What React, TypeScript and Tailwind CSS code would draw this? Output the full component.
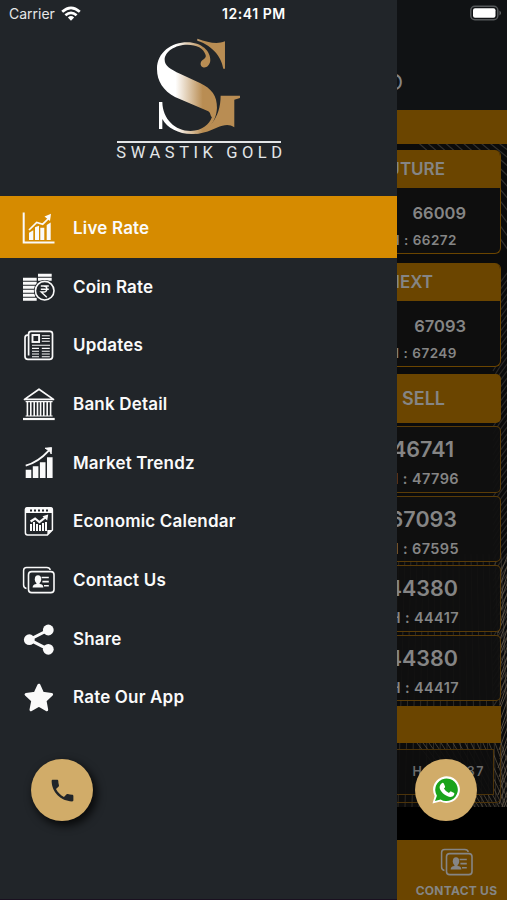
import type { ReactNode } from 'react';
import { MdPhone } from 'react-icons/md';

const ICONS: Record<string, ReactNode> = {
  live: (
    <>
      <path d="M1.7 1.5V31.6H32.5" fill="none" stroke="currentColor" strokeWidth="2" />
      <path d="M7 21.7l4.3-2.4V29H7zM13 16.3l4-1.6V29h-4zM18.3 16.7h4V29h-4zM24.7 14l4-2.4V29h-4z" />
      <path d="M7 19l7.7-7.6 6 1.8L27 7" fill="none" stroke="currentColor" strokeWidth="1.7" />
      <path d="M22.5 5.6L29 2.8 28 10z" />
    </>
  ),
  coin: (
    <>
      <path d="M1 9.2h13.7M1 13.2h13.7M1 17.2h12M1 21.2h11M1 25.2h12M1 29.2h13.7M16 5.3h13.7M16 9.3h13.7" stroke="currentColor" strokeWidth="2.9" />
      <circle cx="22.7" cy="20.7" r="10.8" fill="#212529" />
      <circle cx="22.7" cy="20.7" r="9.3" fill="none" stroke="currentColor" strokeWidth="1.6" />
      <path d="M18.8 16h8M18.8 19.2h8M18.8 16h2.6c4.6 0 4.6 6 0 6h-2.2l5.6 5.2" fill="none" stroke="currentColor" strokeWidth="1.4" />
    </>
  ),
  updates: (
    <g fill="none" stroke="currentColor">
      <path d="M6.5 7.2H5.4Q3 7.4 3 9.9V28.6q0 2.8 3 2.8h21.5q3 0 3-2.8V6q0-2.6-2.6-2.6H9.2Q6.6 3.4 6.6 6v21.5" strokeWidth="1.7" />
      <rect x="10.5" y="7" width="6.6" height="7" strokeWidth="1.9" />
      <path d="M19.8 7.8h8M19.8 10.5h8M19.8 13.2h8M10 17.3h18M10 20.4h7M19.8 20.4h8M10 23.2h7M19.8 23.2h8M10 26h7M19.8 26h8M10 28.7h7M19.8 28.7h8" strokeWidth="1.1" />
    </g>
  ),
  bank: (
    <g fill="none" stroke="currentColor">
      <path d="M17 2.2L2.5 12.4h29z" strokeWidth="1.7" strokeLinejoin="round" />
      <path d="M3.6 14.6h27M3.6 29h27" strokeWidth="1.1" />
      <path d="M5.4 15v14M8.8 15v14M12.2 15v14M15.5 15v14M18.6 15v14M21.8 15v14M25.2 15v14M28.6 15v14" strokeWidth="1.6" />
      <path d="M1 32h31.7" strokeWidth="2.2" />
    </g>
  ),
  market: (
    <>
      <path d="M3.7 23.7h5.6V32H3.7zM10.8 20.2h5.6V32h-5.6zM17.9 16.2h5.6V32h-5.6zM25 11.2h5.6V32H25z" />
      <path d="M3.7 19.6C13.5 17 21 11 27 4.4" fill="none" stroke="currentColor" strokeWidth="1.9" />
      <path d="M23 2.2l6.6-.6-.4 6.4-1.6-3z" stroke="currentColor" strokeWidth=".9" />
    </>
  ),
  calendar: (
    <>
      <path d="M25.4 31H5.6Q3.4 31 3.4 28.8V6q0-2.3 2.2-2.3h22.6Q30.4 3.7 30.4 6v20z" fill="none" stroke="currentColor" strokeWidth="1.5" />
      <path d="M3 9V5q0-1.7 2-1.7h23.8q2 0 2 1.7V9z" />
      <path d="M25.4 31v-5h5z" />
      <path d="M8 6.5h19" stroke="#212529" strokeWidth="2" strokeDasharray="2 2" />
      <path d="M9 27v-7M12 27v-9M15 27v-7M18 27v-6M21 27v-8M24 27v-9" stroke="currentColor" strokeWidth="2" />
      <path d="M8.6 17.5l4.5-3 4.3 3.5 6.5-5" fill="none" stroke="currentColor" strokeWidth="2.2" />
      <path d="M20.5 12.2l5.7-1.6-1 6z" />
    </>
  ),
  contact: (
    <>
      <path d="M4.5 25.4Q1.6 25 1.6 22V7.5q0-3 3-3h20.2q3 0 3.4 2.5" fill="none" stroke="currentColor" strokeWidth="1.5" />
      <rect x="6.5" y="8.6" width="25.5" height="21" rx="3.2" fill="none" stroke="currentColor" strokeWidth="1.6" />
      <ellipse cx="16" cy="16.2" rx="3.2" ry="3.9" />
      <path d="M14.4 18h3.2v3q3.6.4 3.8 3.5H10.6q.2-3.1 3.8-3.5z" />
      <path d="M19.6 14.5h7.2M20.4 18.6h6.4M22 22.7h4.8" stroke="currentColor" strokeWidth="1.6" />
    </>
  ),
  share: (
    <>
      <path d="M26.3 8L7.3 17.7l19 9.6" fill="none" stroke="currentColor" strokeWidth="3" />
      <circle cx="26.3" cy="8" r="5.4" />
      <circle cx="7.3" cy="17.7" r="5.4" />
      <circle cx="26.3" cy="27.3" r="5.4" />
    </>
  ),
  star: (
    <path
      d="M16.9 5.2l3.7 8.1 9 1.1-6.6 6.2 1.7 9.1-7.8-4.4L9 29.7l1.8-9.1-6.7-6.2 9-1.1z"
      stroke="currentColor"
      strokeWidth="3"
      strokeLinejoin="round"
    />
  ),
};

const MENU = [
  { icon: 'live', label: 'Live Rate' },
  { icon: 'coin', label: 'Coin Rate' },
  { icon: 'updates', label: 'Updates' },
  { icon: 'bank', label: 'Bank Detail' },
  { icon: 'market', label: 'Market Trendz' },
  { icon: 'calendar', label: 'Economic Calendar' },
  { icon: 'contact', label: 'Contact Us' },
  { icon: 'share', label: 'Share' },
  { icon: 'star', label: 'Rate Our App' },
];

const FUTURES = [
  { title: 'FUTURE', price: '66009', high: '66272', pad: 'pr-[55px]' },
  { title: 'NEXT', price: '67093', high: '67249', pad: 'pr-[67px]' },
];

const RATES = [
  { price: '46741', high: '47796', pad: 'pr-[46px]' },
  { price: '67093', high: '67595', pad: 'pr-[43px]' },
  { price: '44380', high: '44417', pad: 'pr-[42px]' },
  { price: '44380', high: '44417', pad: 'pr-[42px]' },
];

function Glyph({ name, className }: { name: string; className?: string }) {
  return (
    <svg viewBox="0 0 34 34" fill="currentColor" className={className}>
      {ICONS[name]}
    </svg>
  );
}

function Logo() {
  return (
    <svg viewBox="165 22 262 296" className="h-[98.7px] w-[87.3px]">
      <defs>
        <linearGradient id="gold" gradientUnits="userSpaceOnUse" x1="172" y1="0" x2="420" y2="0">
          <stop offset="0.22" stopColor="#fff" />
          <stop offset="0.55" stopColor="#b98d53" />
          <stop offset="1" stopColor="#b98d53" />
        </linearGradient>
      </defs>
      <g fill="url(#gold)">
        <path d="M171 118C171 68 215 38 262 38C305 38 332 65 331 92C330 108 318 116 309 113C300 110 300 98 307 92C315 86 319 83 317 76C311 55 290 45 262 45C225 45 194 66 194 90C194 109 212 119 240 132L300 160C335 177 352 199 351 235C348 285 315 313 275 313C235 313 202 295 187 268V298H177V217H187C188 268 225 304 272 304C308 303 328 284 336 262C331 262 333 250 325 245L225 202C190 183 171 155 171 118Z" />
        <path d="M292 27C325 38 350 45 375 35V117H370C366 88 343 49 292 33Z" />
        <path d="M362 198H420V205L403 210V293C387 282 373 285 350 294C325 306 300 314 272 313C325 309 362 265 362 198Z" />
      </g>
    </svg>
  );
}

function Backdrop() {
  return (
    <svg viewBox="0 0 110 663" className="absolute inset-x-0 top-[34px] h-[663px] w-full" fill="none">
      <g stroke="#33312e" strokeWidth="1.2">
        {Array.from({ length: 20 }, (_, i) => (
          <path key={i} d={`M${12 + i * 9} -8Q${60 + i * 8} 24 140 ${150 - i * 14}`} />
        ))}
        {Array.from({ length: 60 }, (_, i) => (
          <path key={i} d={`M96 ${150 + i * 7}Q105 ${134 + i * 7} 118 ${120 + i * 7}`} opacity="0.8" />
        ))}
      </g>
      <g stroke="#5c5245" strokeWidth="1">
        {Array.from({ length: 28 }, (_, i) => (
          <path key={i} d={`M${-20 + i * 7} 663L${-10 + i * 6} 410`} opacity="0.45" />
        ))}
        {Array.from({ length: 28 }, (_, i) => (
          <path key={i} d={`M${101 + (i % 3)} ${435 + i * 9}L112 ${408 + i * 9}`} opacity="0.9" />
        ))}
        {Array.from({ length: 16 }, (_, i) => (
          <path key={i} d={`M${70 + i * 4} 663L${20 + i * 6} 599`} opacity="0.7" />
        ))}
      </g>
    </svg>
  );
}

function MenuDrawer() {
  return (
    <aside className="flex h-full w-[397px] shrink-0 flex-col border-b border-[#1a1020] bg-[#212529]">
      <div className="flex h-[27px] items-center pl-[9px] text-[#e6e7e8]">
        <span className="w-[48px] text-[14px]">Carrier</span>
        <svg viewBox="0 0 20 15" className="ml-[4px] h-[15px] w-5" fill="none" stroke="#fff" strokeWidth="2.7">
          <path d="M1.2 5.8Q10-2.1 18.8 5.8M4.4 9.2Q10 4.4 15.6 9.2" />
          <path d="M6.9 11.4Q10 8.8 13.1 11.4L10 14.7z" fill="#fff" stroke="none" />
        </svg>
        <span className="ml-[141px] whitespace-nowrap text-[14px] font-semibold tracking-[0.55px] text-white">12:41 PM</span>
      </div>
      <div className="flex h-[169px] flex-col items-center pt-[10px]">
        <Logo />
        <div className="mt-[5px] h-[2px] w-[164px] bg-[#e3e5e7]" />
        <p className="mt-px whitespace-nowrap pl-[6px] font-[Roboto] text-[16.5px] leading-[18px] tracking-[4.55px] text-[#e3e5e7]">
          SWASTIK GOLD
        </p>
      </div>
      <nav className="text-[#fafafa]">
        {MENU.map((item, i) => (
          <div
            key={item.label}
            className={`flex items-center pl-[22px] ${i === 0 ? 'h-[61.5px] bg-[#d68b00] pt-[2px]' : 'h-[58.66px]'}`}
          >
            <Glyph name={item.icon} className="h-[34px] w-[34px]" />
            <span className="ml-[17px] whitespace-nowrap text-[17px] font-semibold leading-[26px] tracking-[0.18px]">
              {item.label}
            </span>
          </div>
        ))}
      </nav>
    </aside>
  );
}

function RateScreen() {
  return (
    <main className="flex h-full min-w-0 flex-1 flex-col overflow-hidden bg-black text-[#858585]">
      <header className="flex h-[110px] items-end justify-end bg-[#101214] pb-[17px] pr-[104px]">
        <span className="text-[22px] leading-[22px]">O</span>
      </header>
      <div className="relative h-[697px] bg-[#0b0b0b]">
        <Backdrop />
        <div className="relative flex flex-col">
          <div className="h-[34px] bg-[#6b4500]" />
          <div className="mr-[6px] mt-[6px] flex flex-col gap-[9px]">
            {FUTURES.map((f) => (
              <section key={f.title} className="h-[104px] overflow-hidden rounded-r-[6px] border-b border-r border-[#6b4500] bg-[#0e0e0e]">
                <h2 className={`flex h-[38px] items-center justify-end bg-[#6b4500] pt-[2px] text-[17px] font-semibold ${f.pad}`}>
                  {f.title}
                </h2>
                <p className="mt-[12px] flex justify-end pr-[34px] text-[16.5px] font-semibold leading-[26px]">{f.price}</p>
                <p className="mt-[4px] flex justify-end whitespace-nowrap pr-[43px] text-[13.5px] font-semibold leading-[20px] tracking-[0.5px]">
                  H : {f.high}
                </p>
              </section>
            ))}
          </div>
          <div className="mr-[6px] mt-[7px] flex h-[49px] items-center justify-end rounded-r-[5px] bg-[#6b4500] pr-[56px] text-[18px] font-semibold">
            SELL
          </div>
          <div className="mr-[6px] mt-[3px] flex flex-col gap-[3px]">
            {RATES.map((r, i) => (
              <section key={i} className="h-[66.6px] rounded-r-[5px] border-y border-r border-[#5a3c08] bg-[#0f0f0f]/90">
                <p className={`mt-[8px] flex justify-end text-[21.5px] font-semibold leading-[28px] ${r.pad}`}>{r.price}</p>
                <p className="mt-[6px] flex justify-end whitespace-nowrap pr-[41px] text-[14.5px] font-semibold leading-[20px] tracking-[0.4px]">
                  H : {r.high}
                </p>
              </section>
            ))}
          </div>
          <div className="mr-[6px] mt-[5px] h-[37px] bg-[#6b4500]" />
          <div className="mr-[6px] mt-[2px] h-[58px] rounded-br-[5px] border-b border-r border-[#4c330a] pr-[6px] pt-[4px]">
            <div className="flex h-[46px] items-center justify-end border-y border-r border-[#4c330a] bg-[#0d0d0d]/90 pr-[8px] text-[12.5px] font-semibold tracking-[1.5px] text-[#6c6c6c]">
              <span className="whitespace-nowrap">H : 66437</span>
            </div>
          </div>
        </div>
      </div>
      <footer className="mt-auto flex h-[60px] flex-col items-center bg-[#6b4500] pl-[9px] pt-[5px]">
        <Glyph name="contact" className="h-[34px] w-[34px]" />
        <span className="mt-[3px] whitespace-nowrap text-[12px] font-bold leading-[18px] tracking-[0.25px]">CONTACT US</span>
      </footer>
    </main>
  );
}

export default function App() {
  return (
    <div className="relative flex h-[900px] w-[507px] overflow-hidden bg-black font-[Inter,sans-serif]">
      <MenuDrawer />
      <RateScreen />
      <svg viewBox="0 0 32 16" className="absolute left-[470px] top-[5px] h-4 w-8">
        <rect x="0.8" y="1.3" width="27" height="13.4" rx="4" fill="none" stroke="#55585a" strokeWidth="1.5" />
        <rect x="3" y="3.3" width="22.5" height="9.5" rx="2" fill="#fff" />
        <path d="M29.5 5.5q3 2.5 0 5z" fill="#66696b" />
      </svg>
      <button className="absolute left-[31px] top-[759px] flex h-[62px] w-[62px] items-center justify-center rounded-full bg-[#d1ac69] text-[#212529] shadow-[3px_4px_9px_1px_rgba(0,0,0,0.75)]">
        <MdPhone className="h-[29px] w-[29px]" />
      </button>
      <button className="absolute left-[415px] top-[759px] flex h-[62px] w-[62px] items-center justify-center rounded-full bg-[#d1ac69]">
        <svg viewBox="0 0 30 30" className="h-[30px] w-[30px]">
          <path d="M1.5 28.5L3.7 21A13.4 13.4 0 1 1 9.3 26.5z" fill="#fff" />
          <path d="M4 26L5.9 20.7A11.3 11.3 0 1 1 9.6 24.4z" fill="#19a31b" />
          <path d="M10.500 8.500q1.500-1.500 2.400.2l1.200 2.700q.3.800-1.200 2.200 1.800 3.200 5 4.500 1.600-2 2.200-1.700l3 1.500q.7.500-.2 2.300-2.200 3-6.800.8-5-2-7.100-6.700-1.200-3.300 1.500-5.800z" fill="#fff" />
        </svg>
      </button>
    </div>
  );
}
